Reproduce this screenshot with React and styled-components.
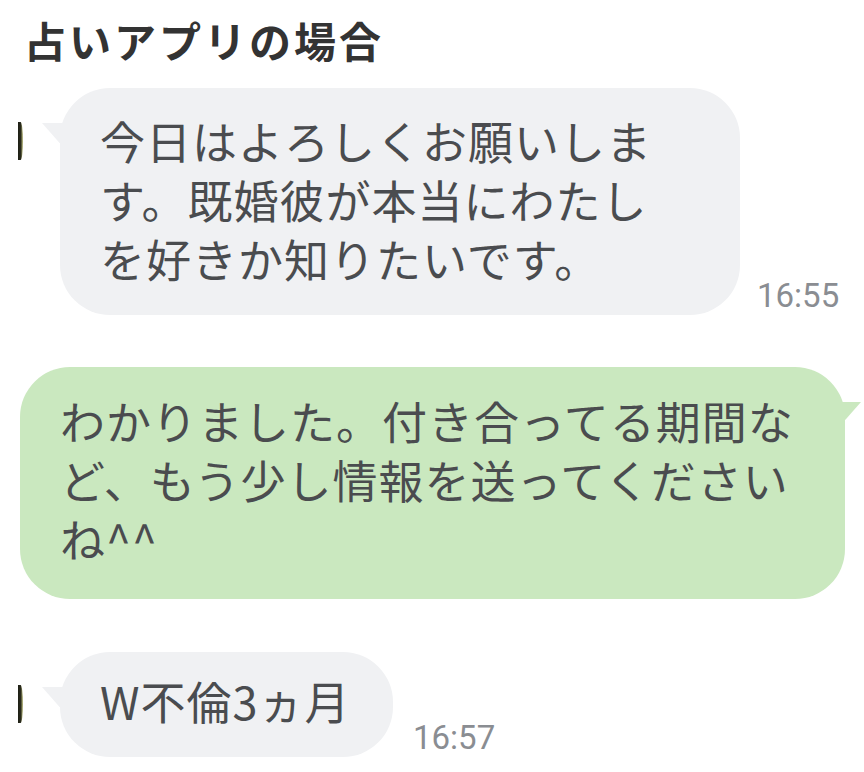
import styled, { createGlobalStyle } from "styled-components";

const GlobalStyle = createGlobalStyle`
    html, body {
        margin: 0;
        padding: 0;
        background: #ffffff;
    }
    body {
        font-family: "Noto Sans CJK JP", "Noto Sans", sans-serif;
    }
`;

const Page = styled.div`
    width: 864px;
    height: 772px;
    overflow: hidden;
    display: flex;
    flex-direction: column;
`;

const Title = styled.h1`
    margin: 0;
    padding-left: 24px;
    font-size: 42px;
    line-height: 80px;
    font-weight: 700;
    letter-spacing: 3px;
    color: #333333;
`;

const Row = styled.div`
    display: flex;
    align-items: flex-end;
    padding-left: ${(p) => p.$indent}px;
    margin-top: ${(p) => p.$top}px;
`;

const Avatar = styled.div`
    align-self: flex-start;
    width: 5px;
    height: 38px;
    margin-top: ${(p) => p.$offset}px;
    border-radius: 0 50% 50% 0 / 0 50% 50% 0;
    background: linear-gradient(90deg, #1e1f16 0%, #2a2b1c 55%, #c8c98a 100%);
`;

const Bubble = styled.div`
    position: relative;
    box-sizing: border-box;
    width: ${(p) => p.$width}px;
    margin-left: ${(p) => (p.$mine ? 0 : 37)}px;
    padding: ${(p) => p.$pt}px ${(p) => p.$padRight}px ${(p) => p.$pb}px 40px;
    border-radius: 50px;
    background: ${(p) => (p.$mine ? "#cae8bf" : "#f0f1f3")};
    color: #4a4c4f;
    font-size: 45px;
    line-height: 59px;
    letter-spacing: 1px;

    &::before {
        content: "";
        position: absolute;
        top: 35px;
        width: 22px;
        height: 20px;
        background: inherit;
        ${(p) =>
            p.$mine
                ? `right: -16px; clip-path: polygon(100% 0, 0 0, 0 100%, 20% 100%);`
                : `left: -18px; clip-path: polygon(0 0, 100% 0, 100% 100%, 80% 100%);`}
    }
`;

const Time = styled.span`
    margin-left: ${(p) => p.$gap}px;
    margin-bottom: 2px;
    font-family: Roboto, "Noto Sans", sans-serif;
    font-size: 33px;
    line-height: 34px;
    color: #8a8d92;
`;

function App() {
    return (
        <Page>
            <GlobalStyle />
            <Title>占いアプリの場合</Title>
            <Row $indent={18} $top={8}>
                <Avatar $offset={34} />
                <Bubble $width={680} $padRight={60} $pt={23} $pb={27}>
                    今日はよろしくお願いします。既婚彼が本当にわたしを好きか知りたいです。
                </Bubble>
                <Time $gap={17}>16:55</Time>
            </Row>
            <Row $indent={20} $top={52}>
                <Bubble $mine $width={825} $padRight={40} $pt={24} $pb={31}>
                    わかりました。付き合ってる期間など、もう少し情報を送ってくださいね^^
                </Bubble>
            </Row>
            <Row $indent={18} $top={53}>
                <Avatar $offset={33} />
                <Bubble $width={333} $padRight={30} $pt={19} $pb={27}>
                    W不倫3ヵ月
                </Bubble>
                <Time $gap={20}>16:57</Time>
            </Row>
        </Page>
    );
}

export default App;
